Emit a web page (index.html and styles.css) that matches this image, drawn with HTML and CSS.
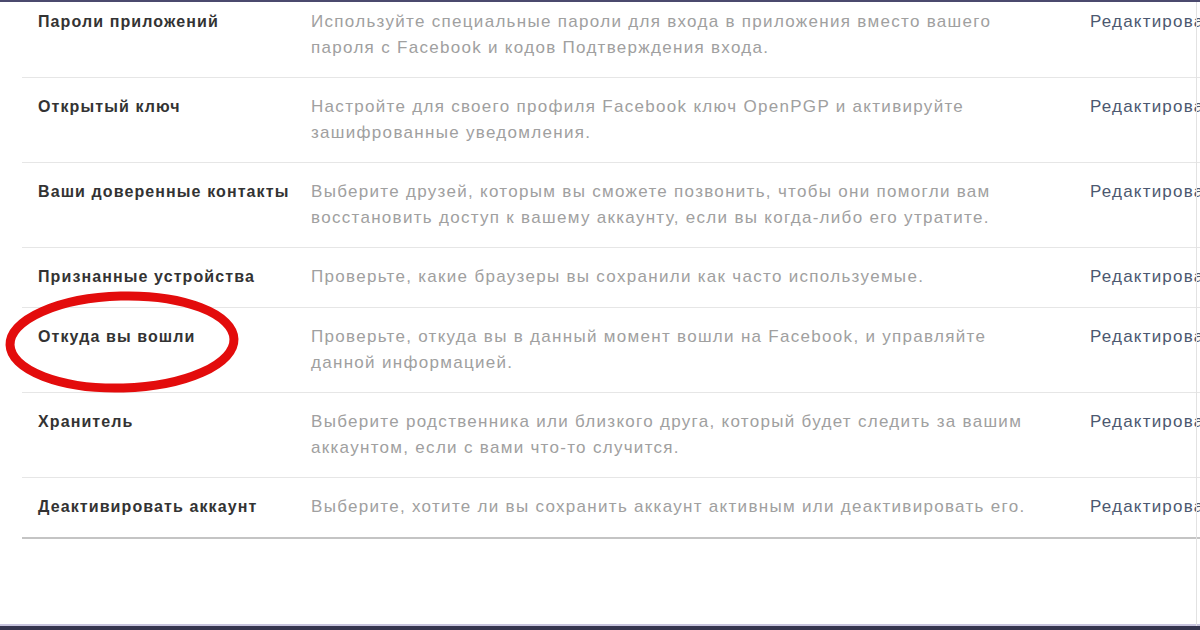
FILE: index.html
```html
<!DOCTYPE html>
<html lang="ru">
<head>
<meta charset="utf-8">
<link rel="stylesheet" href="styles.css">
</head>
<body>
<div class="frame">
  <div class="list">
    <div class="row">
      <div class="title">Пароли приложений</div>
      <div class="desc">Используйте специальные пароли для входа в приложения вместо вашего пароля с Facebook и кодов Подтверждения входа.</div>
      <div class="edit">Редактировать</div>
    </div>
    <div class="row">
      <div class="title">Открытый ключ</div>
      <div class="desc">Настройте для своего профиля Facebook ключ OpenPGP и активируйте зашифрованные уведомления.</div>
      <div class="edit">Редактировать</div>
    </div>
    <div class="row">
      <div class="title">Ваши доверенные контакты</div>
      <div class="desc">Выберите друзей, которым вы сможете позвонить, чтобы они помогли вам восстановить доступ к вашему аккаунту, если вы когда-либо его утратите.</div>
      <div class="edit">Редактировать</div>
    </div>
    <div class="row">
      <div class="title">Признанные устройства</div>
      <div class="desc">Проверьте, какие браузеры вы сохранили как часто используемые.</div>
      <div class="edit">Редактировать</div>
    </div>
    <div class="row">
      <div class="title">Откуда вы вошли</div>
      <div class="desc">Проверьте, откуда вы в данный момент вошли на Facebook, и управляйте данной информацией.</div>
      <div class="edit">Редактировать</div>
    </div>
    <div class="row">
      <div class="title">Хранитель</div>
      <div class="desc">Выберите родственника или близкого друга, который будет следить за вашим аккаунтом, если с вами что-то случится.</div>
      <div class="edit">Редактировать</div>
    </div>
    <div class="row last">
      <div class="title">Деактивировать аккаунт</div>
      <div class="desc">Выберите, хотите ли вы сохранить аккаунт активным или деактивировать его.</div>
      <div class="edit">Редактировать</div>
    </div>
  </div>
  <svg class="circle" width="250" height="120" viewBox="0 0 250 120">
    <ellipse cx="122" cy="57" rx="112" ry="46" fill="none" stroke="#e30c0c" stroke-width="9" transform="rotate(-1.5 122 57)"/>
  </svg>
  <div class="edge"></div>
</div>
</body>
</html>
```
FILE: styles.css
```css
html, body {
  margin: 0;
  padding: 0;
  background: #fff;
}
body {
  width: 1200px;
  height: 630px;
  overflow: hidden;
  font-family: "Liberation Sans", Arial, sans-serif;
}
.frame {
  position: relative;
  box-sizing: border-box;
  width: 1200px;
  height: 630px;
  overflow: hidden;
  border-top: 2px solid #4b4a6e;
  border-bottom: 4px solid #35354f;
  box-shadow: inset 0 -2px 0 #c8c4de;
}
.list {
  margin-top: -9px;
  margin-left: 22px;
  border-bottom: 2px solid #c4c4c4;
  width: 1200px;
}
.row {
  display: grid;
  grid-template-columns: 273px 779px 200px;
  padding: 16px 0 16px 16px;
  min-height: 27px;
  border-bottom: 1px solid #e6e6e6;
  line-height: 26px;
}
.row.last {
  border-bottom: none;
}
.title {
  font-weight: bold;
  font-size: 16px;
  letter-spacing: 1.1px;
  color: #333;
}
.desc {
  font-size: 17px;
  letter-spacing: 1.3px;
  color: #a0a0a0;
  padding-right: 40px;
}
.edit {
  font-size: 17px;
  letter-spacing: 1.2px;
  color: #4c5870;
  white-space: nowrap;
}
.circle {
  position: absolute;
  left: 0;
  top: 283px;
}
.edge {
  position: absolute;
  top: 0;
  bottom: 0;
  left: 1196px;
  width: 1px;
  background: #e2e2e2;
}
```
